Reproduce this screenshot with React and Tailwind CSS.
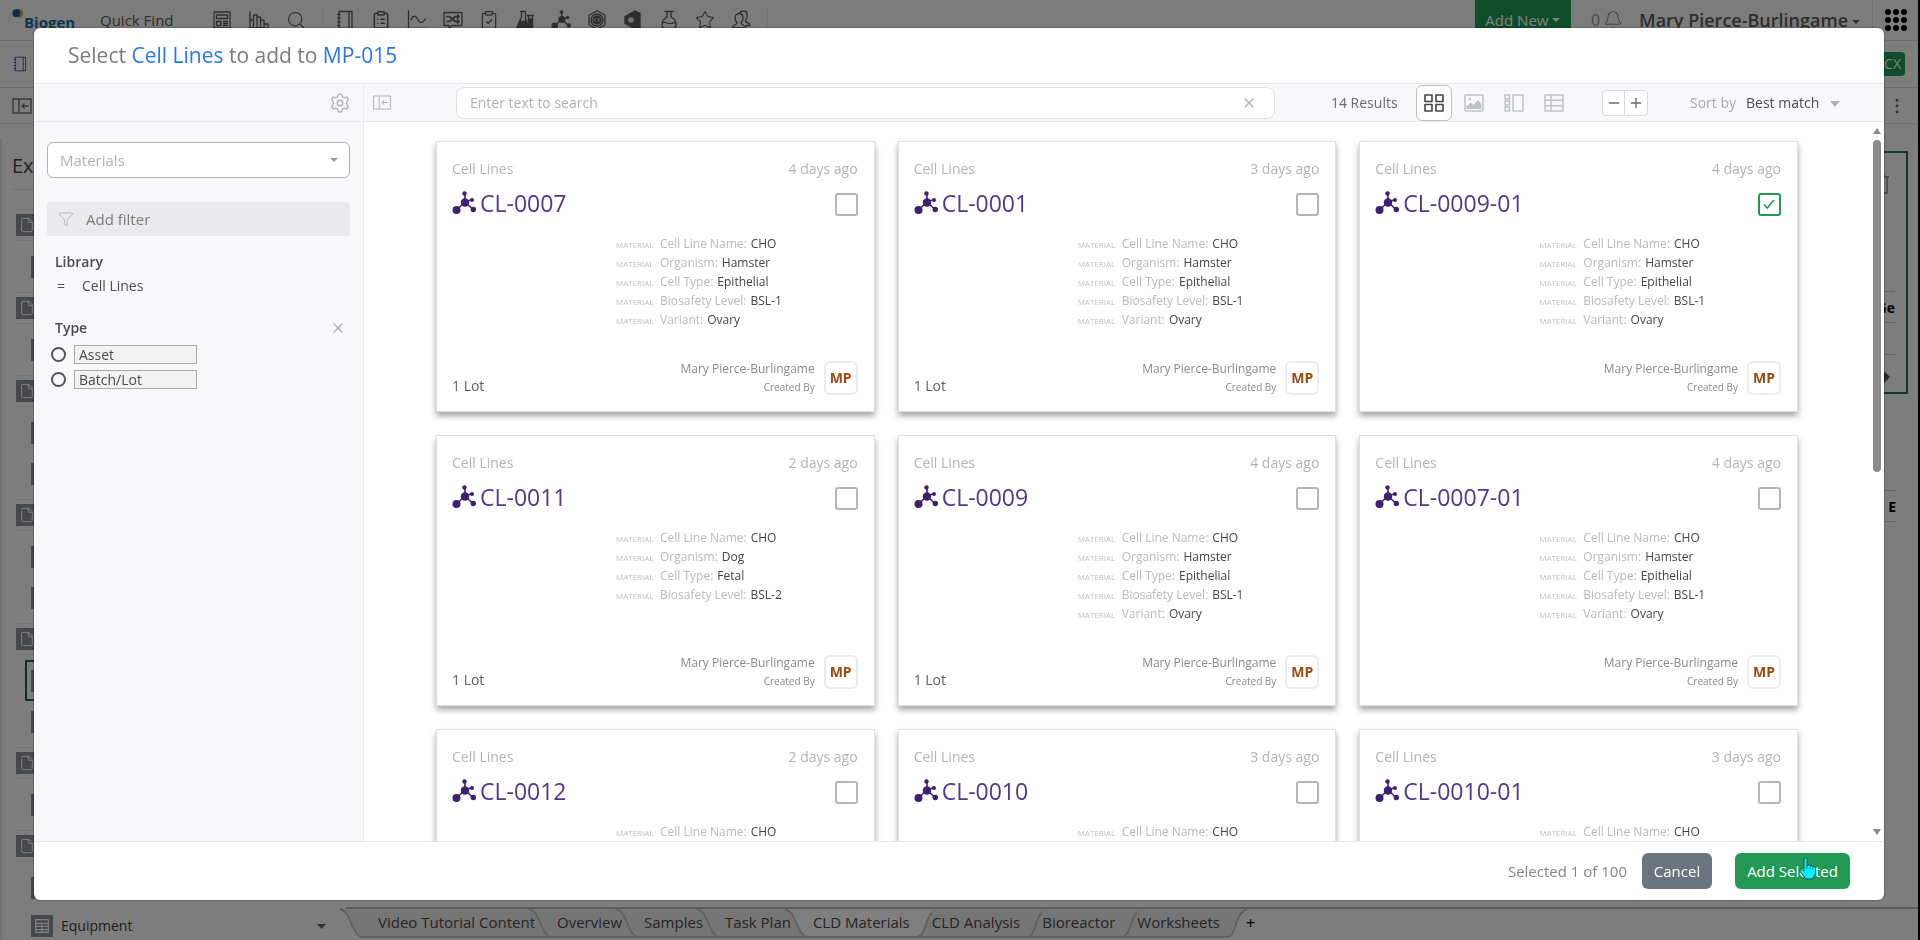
import { useState } from 'react';
import {
  Search,
  ClipboardList,
  ClipboardCheck,
  Star,
  Bell,
  Settings,
  X,
  Filter,
  File,
  Minus,
  Plus,
  MoreVertical,
} from 'lucide-react';

const hamster = [
  ['Cell Line Name', 'CHO'],
  ['Organism', 'Hamster'],
  ['Cell Type', 'Epithelial'],
  ['Biosafety Level', 'BSL-1'],
  ['Variant', 'Ovary'],
];

const dog = [
  ['Cell Line Name', 'CHO'],
  ['Organism', 'Dog'],
  ['Cell Type', 'Fetal'],
  ['Biosafety Level', 'BSL-2'],
];

const mary = { name: 'Mary Pierce-Burlingame', initials: 'MP' };

const items = [
  { id: 'CL-0007', age: '4 days ago', lots: '1 Lot', fields: hamster, by: mary },
  { id: 'CL-0001', age: '3 days ago', lots: '1 Lot', fields: hamster, by: mary },
  { id: 'CL-0009-01', age: '4 days ago', fields: hamster, by: mary },
  { id: 'CL-0011', age: '2 days ago', lots: '1 Lot', fields: dog, by: mary },
  { id: 'CL-0009', age: '4 days ago', lots: '1 Lot', fields: hamster, by: mary },
  { id: 'CL-0007-01', age: '4 days ago', fields: hamster, by: mary },
  { id: 'CL-0012', age: '2 days ago', fields: hamster.slice(0, 1) },
  { id: 'CL-0010', age: '3 days ago', fields: hamster.slice(0, 1) },
  { id: 'CL-0010-01', age: '3 days ago', fields: hamster.slice(0, 1) },
];

// f = folder row, s = child row, a = the child that is open
const tree = ['f', 's', 'f', 's', 'f', 's', 's', 'f', 's', 's', 'f', 'a', 's', 'f', 's', 'f', 's'];

const Svg = ({ children, className = 'w-5 h-5', box = '0 0 20 20' }) => (
  <svg
    viewBox={box}
    className={className}
    fill="none"
    stroke="currentColor"
    strokeWidth="1.3"
    strokeLinecap="round"
    strokeLinejoin="round"
    aria-hidden="true"
  >
    {children}
  </svg>
);

const Molecule = ({ className }) => (
  <svg viewBox="0 0 24 24" className={className} fill="currentColor" stroke="currentColor" aria-hidden="true">
    <path d="M4.5 19 13 11M13 11V3M13 11l6-2M13 11l8 7.500" strokeWidth="1.600" fill="none" />
    <circle cx="4.5" cy="19" r="4" stroke="none" />
    <circle cx="13" cy="11.500" r="4.200" stroke="none" />
    <circle cx="12.500" cy="2.500" r="2.200" stroke="none" />
    <circle cx="20" cy="9" r="2" stroke="none" />
    <circle cx="21.300" cy="18.500" r="2.700" stroke="none" />
  </svg>
);

const Caret = ({ className = 'w-2 h-1' }) => (
  <svg viewBox="0 0 10 6" className={className} preserveAspectRatio="none" fill="currentColor" aria-hidden="true">
    <path d="M0 0h10L5 6z" />
  </svg>
);

const FormIcon = () => (
  <Svg>
    <rect x="2" y="2" width="16" height="16" />
    <path d="M4.500 5h11v3.500h-11zM4.500 11.500h4.500v4H4.500zM11.500 11.500h4M11.500 13.500h4M11.500 15.500h4" />
  </Svg>
);

const BarsIcon = () => (
  <Svg>
    <path d="M1 2v16h18M1 10h3.500M4.500 18V5H8v13M8 18V7h3.500v11M11.500 18v-8H15v8M15 18v-4h4v4" />
  </Svg>
);

const NotebookIcon = ({ className }) => (
  <Svg className={className}>
    <path d="M4 1.500h13v17H4zM14 1.500v17M2.500 4.500H5M2.500 8H5M2.500 12H5M2.500 15.500H5" />
  </Svg>
);

const CurveIcon = () => (
  <Svg>
    <path d="M1.500 1v17.500H19M4 10c2-5 4.500-5 6.500-1s4.500 5 8 0" />
  </Svg>
);

const ShuffleIcon = () => (
  <Svg>
    <path d="M1 2.500h18v13H9l-3 3v-3H1z" />
    <path d="M4 6.500h2.500l6 5H16M4 11.500h2.500l6-5H16M14.500 5 16 6.500 14.500 8M14.500 10l1.500 1.500-1.500 1.500" strokeWidth="1.700" />
  </Svg>
);

const BenchIcon = () => (
  <Svg>
    <path d="M5.500 1.500h5M6.500 1.500V7L1.500 18.500h12" />
    <path d="M5 10.500 1.800 18.500h12.500L10.500 9.500V2" />
    <path d="M4.800 11.500h6.500l3 7H2z" fill="currentColor" />
    <path d="M12.500 5.500h6M13.500 5.500v11a2 2 0 0 0 4 0v-11" />
    <path d="M13.500 9h4v8h-4z" fill="currentColor" />
  </Svg>
);

const HexRingIcon = () => (
  <Svg>
    <path d="M10 .8l8 4.500v9.400l-8 4.500-8-4.500V5.300z" />
    <circle cx="10" cy="10" r="6" strokeWidth="1.500" />
    <circle cx="10" cy="10" r="4" fill="currentColor" />
    <path d="M9 8.800a1.400 1.400 0 1 0 0 2.400M11 8.800v2.400h1.200V8.800z" stroke="#ccc" strokeWidth=".8" />
  </Svg>
);

const SolidHexIcon = () => (
  <Svg>
    <path d="M2 6.500 12 1l5 2v14.500L12 19 2 13.500z" fill="currentColor" />
    <circle cx="8" cy="10" r="2.800" fill="#e8e8e8" stroke="none" />
  </Svg>
);

const FlaskIcon = () => (
  <Svg>
    <path d="M6 1.500h8M8 1.500V7c-3 1.500-5 4-5 7.500 0 2.500 1 4 2.500 4h9c1.500 0 2.500-1.500 2.500-4C17 11 15 8.500 12 7V1.500M3.500 13c3-2 5 1.500 8 .5 2-.7 3-1 5-.5" />
  </Svg>
);

const PeopleIcon = () => (
  <Svg>
    <path d="M8 3.500c-2.500 0-4 2-4 4.500 0 2 .8 3.300 1.800 4.300.3 1.700-.8 2.200-2.300 2.700-1.500.6-2 1.500-2 3h13c0-1.500-.5-2.400-2-3-1.500-.5-2.600-1-2.300-2.700 1-1 1.800-2.300 1.800-4.300 0-2.500-1.500-4.500-4-4.500z" />
    <path d="M9 2.500C10 1.500 11 1 12.300 1c2.500 0 4 2 4 4.500 0 2-.8 3.500-1.800 4.500-.2 1.500.5 2.200 2 2.700s2.500 1.300 2.500 2.800h-4" />
  </Svg>
);

const PanelIcon = ({ className }) => (
  <svg viewBox="0 0 20 16" className={className} fill="none" stroke="currentColor" strokeWidth="1.300" aria-hidden="true">
    <rect x="1" y="1" width="18" height="14" />
    <path d="M7 1v14M16.500 8H10M12.500 5.500 10 8l2.500 2.500" />
  </svg>
);

const topIcons = [
  ['Forms', <FormIcon />],
  ['Charts', <BarsIcon />],
  ['Search', <Search className="w-5 h-5" strokeWidth={1.3} />],
];

const appIcons = [
  ['Notebooks', <NotebookIcon />],
  ['Templates', <ClipboardList className="w-5 h-5" strokeWidth={1.8} />],
  ['Assays', <CurveIcon />],
  ['Workflows', <ShuffleIcon />],
  ['Tasks', <ClipboardCheck className="w-5 h-5" strokeWidth={1.5} />],
  ['Samples', <BenchIcon />],
  ['Materials', <Molecule className="w-5 h-5" />],
  ['Compounds', <HexRingIcon />],
  ['Structures', <SolidHexIcon />],
  ['Reactions', <FlaskIcon />],
  ['Favorites', <Star className="w-5 h-5" strokeWidth={1.3} />],
  ['Users', <PeopleIcon />],
];

const TopBar = () => (
  <header className="h-[41px] shrink-0 pt-2 flex items-start border-b border-[#dcdcdc] text-[#5c5c5c] bg-[#f7f9f7]">
    <div className="w-[88px] pl-3 flex">
      <svg viewBox="0 0 14 12" className="w-3 h-3" aria-hidden="true">
        <circle cx="8" cy="5" r="5" fill="#a9b845" />
        <circle cx="5" cy="5" r="4.500" fill="#25538f" />
      </svg>
      <span className="pt-1 text-[15px] leading-5 font-bold text-[#1d6f9f]">Biogen</span>
    </div>
    <span className="w-[112px] pl-3 text-[15px] leading-6">Quick Find</span>
    <nav className="flex h-8 pl-3 gap-[17px]">
      {topIcons.map(([name, icon]) => (
        <button key={name} aria-label={name} className="h-6 w-5 flex items-center">{icon}</button>
      ))}
    </nav>
    <nav className="flex h-8 ml-4 pl-3 pr-4 gap-4 border-x border-[#e6e6e6]">
      {appIcons.map(([name, icon]) => (
        <button key={name} aria-label={name} className="h-6 w-5 flex items-center">{icon}</button>
      ))}
    </nav>
    <div className="grow" />
    <button className="-mt-2 h-10 w-[96px] flex items-center justify-center gap-1 bg-[#1f9a55] text-white text-[15px]">
      Add New <Caret />
    </button>
    <span className="pl-5 text-base leading-6 text-[#999]">0</span>
    <Bell className="w-5 h-5 ml-[3px] mt-0.5 text-[#888]" strokeWidth={1.3} />
    <span className="pl-4 text-[18px] leading-6 font-semibold">Mary Pierce-Burlingame</span>
    <Caret className="w-2 h-1 mt-3 ml-1" />
    <div className="ml-3 mr-3 -mt-2 h-10 border-l border-[#dcdcdc]" />
    <svg viewBox="0 0 22 22" className="w-[22px] h-[22px] mr-[11px] mt-px text-black" fill="currentColor" aria-hidden="true">
      {[3, 11, 19].map((y) => [3, 11, 19].map((x) => <circle key={x + '-' + y} cx={x} cy={y} r="3" />))}
    </svg>
  </header>
);

const FileTree = () => (
  <aside className="w-[346px] shrink-0 mt-[15px] pl-[10px] border-l-2 border-[#e2e2e2] flex flex-col">
    <h2 className="h-[51px] leading-[54px] text-xl text-[#444] border-b border-[#e4e4e4]">Exp</h2>
    <div className="pt-[14px] pl-0.5">
      {tree.map((kind, i) =>
        kind === 'f' ? (
          <div key={i} className="h-[42px] flex items-center">
            <div className="w-full h-8 flex items-center border-y border-[#e8e8e8]">
              <span className="ml-0.5 w-[22px] h-[22px] flex items-center justify-center bg-[#8d9296] text-white">
                <File className="w-4 h-4" strokeWidth={1.5} />
              </span>
            </div>
          </div>
        ) : (
          <div key={i} className={'h-[41px] ml-[11px] flex items-center ' + (kind === 'a' ? 'pl-1 border-2 border-r-0 border-[#156b3c]' : 'pl-1.5')}>
            <span className="w-[22px] h-[22px] bg-[#8d9296]" />
          </div>
        )
      )}
    </div>
    <div className="h-9 mt-1 ml-[19px] pr-5 flex items-center text-[#3c3c3c]">
      <span className="w-[22px] h-[22px] flex items-center justify-center bg-[#8d9296] text-white">
        <Svg className="w-[18px] h-[18px]">
          <path d="M3 3h14v14H3zM3 7h14M3 10.500h14M3 14h14M10 7v10" />
        </Svg>
      </span>
      <span className="pl-2 text-sm grow">Equipment</span>
      <Caret className="w-[9px] h-[5px] text-[#666]" />
    </div>
  </aside>
);

const tabs = ['Video Tutorial Content', 'Overview', 'Samples', 'Task Plan', 'CLD Materials', 'CLD Analysis', 'Bioreactor', 'Worksheets'];
const activeTab = tabs.indexOf('CLD Materials');

// slanted divider; the half that belongs to the open tab is lighter
const Slant = ({ back, left, right, end }) => (
  <svg viewBox="0 0 22 30" className="w-[22px] h-[30px] shrink-0 overflow-visible" aria-hidden="true">
    <path d={back ? 'M0 0H-4C6 4 6 26 16 28H0z' : 'M0 0H26C14 4 17 26 7 28H0z'} fill={left} />
    <path d={back ? 'M-4 0H22V28H16C6 26 6 4-4 0z' : 'M26 0H22V28H7C17 26 14 4 26 0z'} fill={right} />
    <path
      d={(back ? 'M-6 0C6 3 5 26 16 28H22' : 'M28 0C14 3 18 26 7 28H0') + (end ? '' : 'M0 28H22')}
      fill="none"
      stroke="#c2c2c2"
      strokeWidth="2"
    />
  </svg>
);

const TabBar = () => (
  <div className="h-[33px] shrink-0 flex items-start border-t-2 border-[#b5b5b5] text-[#4a4a4a] text-[15px]" role="tablist">
    <Slant back end left="#fbfbfb" right="#ebebeb" />
    {tabs.map((tab, i) => (
      <div key={tab} className="flex shrink-0">
        <button
          role="tab"
          aria-selected={i === activeTab}
          className={'h-[29px] border-b-2 border-[#c2c2c2] whitespace-nowrap ' + (i === activeTab ? 'bg-white' : 'bg-[#ebebeb]') + (i === 0 ? ' pl-2.5' : '')}
        >
          {tab}
        </button>
        <Slant
          back={i < activeTab}
          end={i === tabs.length - 1}
          left={i === activeTab ? '#ffffff' : '#ebebeb'}
          right={i === activeTab - 1 ? '#ffffff' : i === tabs.length - 1 ? '#fbfbfb' : '#ebebeb'}
        />
      </div>
    ))}
    <button aria-label="Add tab" className="h-7 pl-1 text-base text-black">+</button>
  </div>
);

const Background = () => (
  <div className="h-screen overflow-hidden flex flex-col bg-[#fbfafb] border-r-2 border-black">
    <TopBar />
    <div className="h-[47px] shrink-0 flex items-center justify-between pl-3 pr-[13px] border-b border-[#dcdcdc]">
      <NotebookIcon className="w-4 h-5 text-[#6a55a8]" />
      <button className="h-6 w-20 pr-1 rounded bg-[#1f9a55] text-white text-sm text-right">CX</button>
    </div>
    <div className="h-9 shrink-0 flex items-center justify-between pl-3 pr-[11px] border-b border-[#e2e2e2] text-[#666]">
      <PanelIcon className="w-5 h-4" />
      <MoreVertical className="w-5 h-5" strokeWidth={1.5} />
    </div>
    <div className="grow min-h-0 flex">
      <FileTree />
      <section className="grow min-w-0 flex flex-col">
        <div className="grow min-h-0 pt-[27px] pr-[10px]">
          <div className="h-[243px] pt-[21px] border-2 border-[#1f7a48] flex flex-col items-end">
            <svg viewBox="0 0 18 20" className="w-[18px] h-5 mr-4 text-[#999]" fill="none" stroke="currentColor" strokeWidth="1.800" aria-hidden="true">
              <path d="M1 3h16M6 3V1h6v2M3 3v16h12V3M7 7v8M11 7v8" />
            </svg>
            <div className="w-20 mt-[97px] mr-[11px] h-8 border-y border-[#ccc] leading-8 text-right font-bold text-black text-sm">Ge</div>
            <div className="w-20 mr-[11px] h-8 border-b border-[#ccc]" />
            <svg viewBox="0 0 10 12" className="w-[10px] h-3 mt-4 mr-4 text-[#555]" fill="currentColor" aria-hidden="true">
              <path d="M4 0l6 6-6 6z" />
            </svg>
          </div>
          <div className="w-20 mt-[96px] ml-auto mr-3 h-8 border-y border-[#ccc] leading-8 text-right text-sm font-bold text-black">E</div>
        </div>
        <TabBar />
      </section>
    </div>
  </div>
);

const Card = ({ item, checked, onToggle }) => (
  <article className="h-[271px] pt-[17px] pl-[15px] pr-4 pb-4 flex flex-col bg-white border border-[#dfe0e6] shadow-[0_4px_6px_rgba(0,0,0,0.35)]">
    <div className="flex justify-between text-sm leading-5 text-[#b3b3b8]">
      <span>Cell Lines</span>
      <span>{item.age}</span>
    </div>
    <div className="h-8 mt-2 flex items-center">
      <Molecule className="w-6 h-6 text-[#3f1f70]" />
      <label htmlFor={item.id} className="pl-1 text-[23px] leading-8 text-[#52378a]">{item.id}</label>
      <span className="ml-auto mt-0.5 relative w-[23px] h-[23px]">
        <input
          id={item.id}
          type="checkbox"
          checked={checked}
          onChange={onToggle}
          className="block appearance-none w-[23px] h-[23px] rounded-[3px] border-2 border-[#b5b5b8] bg-white checked:border-[#229954]"
        />
        {checked && (
          <svg viewBox="0 0 12 12" className="absolute inset-0 m-auto w-3 h-3 pointer-events-none" fill="none" stroke="#229954" strokeWidth="1.600">
            <path d="M1 6.500 4.300 10 11 2" />
          </svg>
        )}
      </span>
    </div>
    <dl className="mt-[15px] pl-[164px] text-xs leading-[19px]">
      {item.fields.map(([label, value]) => (
        <div key={label} className="h-[19px] flex">
          <span className="w-11 pt-px text-[8px] text-[#c0c0c4]">MATERIAL</span>
          <dt className="text-[#b9b9be]">{label}:</dt>
          <dd className="pl-1 text-[#444]">{value}</dd>
        </div>
      ))}
    </dl>
    {item.by && (
      <div className="mt-auto h-[34px] flex items-center">
        <span className="pt-4 text-sm text-[#5f5f5f]">{item.lots}</span>
        <div className="ml-auto pr-[9px] text-right text-[#8a8a8a]">
          <p className="text-xs leading-[18px]">{item.by.name}</p>
          <p className="text-[10px] leading-[18px]">Created By</p>
        </div>
        <span className="w-[34px] h-[34px] rounded-md border-2 border-[#ececee] flex items-center justify-center text-sm font-bold text-[#9c4a12]">
          {item.by.initials}
        </span>
      </div>
    )}
  </article>
);

const SideFilters = () => (
  <aside className="w-[330px] shrink-0 flex flex-col bg-[#f8f8fb] border-r border-[#e9e9ef] text-[#4c4c4c]">
    <div className="h-[38px] shrink-0 pr-3 flex items-center justify-end border-b border-[#e6e7ee]">
      <button aria-label="Filter settings"><Settings className="w-[22px] h-[22px] text-[#b0b0b5]" strokeWidth={1.5} /></button>
    </div>
    <div className="pt-5 pl-[13px] pr-[13px]">
      <div className="relative">
        <select aria-label="Item type" className="w-full h-9 pl-3 appearance-none rounded-md border border-[#b3b3b6] bg-white text-[15px] text-[#b3b3b6]">
          <option>Materials</option>
        </select>
        <Caret className="absolute right-3 top-4 w-2 h-1 text-[#999] pointer-events-none" />
      </div>
      <button className="w-full h-[34px] mt-6 pl-2.5 flex items-center rounded-[3px] bg-[#eaeaec] text-[15px] text-[#7a7a7a]">
        <Filter className="w-[18px] h-4 mr-[11px] text-[#b5bcc0]" strokeWidth={1.5} />
        Add filter
      </button>
      <div className="pl-2 text-sm leading-5">
        <h3 className="mt-4 font-semibold">Library</h3>
        <p className="mt-1 flex"><span className="w-[27px] pl-0.5">=</span>Cell Lines</p>
        <div className="mt-[22px] flex items-center justify-between">
          <h3 className="font-semibold">Type</h3>
          <button aria-label="Remove type filter" className="pr-1"><X className="w-4 h-4 text-[#b0b0b3]" /></button>
        </div>
      </div>
      <div className="mt-1 pl-1 text-sm">
        {['Asset', 'Batch/Lot'].map((type) => (
          <label key={type} className="h-[25px] flex items-center gap-2">
            <input type="radio" name="type" value={type} className="appearance-none w-[15px] h-[15px] rounded-full border-2 border-[#555]" />
            <span className="w-[123px] h-[19px] pl-1 leading-[17px] border border-[#aaa] bg-[#f2f2f3]">{type}</span>
          </label>
        ))}
      </div>
    </div>
  </aside>
);

const Toolbar = () => {
  const [query, setQuery] = useState('');

  return (
    <div className="h-[38px] shrink-0 flex items-center bg-[#f8f8fb] border-b border-[#e6e7ee] text-sm text-[#6a6a6a]">
      <button aria-label="Collapse filters" className="ml-2 mr-16"><PanelIcon className="w-5 h-[15px] text-[#bdbdc2]" /></button>
      <div className="relative grow">
        <input
          type="text"
          aria-label="Search"
          value={query}
          onChange={(e) => setQuery(e.target.value)}
          placeholder="Enter text to search"
          className="block w-full h-8 px-[13px] rounded-lg border border-[#dfdfe6] bg-white placeholder:text-[#b0b0b3]"
        />
        <button aria-label="Clear search" onClick={() => setQuery('')} className="absolute right-[18px] top-2">
          <X className="w-4 h-4 text-[#aeb2b8]" />
        </button>
      </div>
      <span className="ml-14 w-[85px] whitespace-nowrap">14 Results</span>
      <div className="flex items-center gap-3 text-[#bfc3c9]">
        <button aria-label="Card view" className="w-9 h-9 flex items-center justify-center rounded-md border border-[#c0c0c4] bg-white text-[#444]">
          <Svg>
            <path d="M1 2h7v6.500H1zM12 2h7v6.500h-7zM1 11.500h7V18H1zM12 11.500h7V18h-7z" strokeWidth="1.600" />
          </Svg>
        </button>
        <button aria-label="Image view">
          <Svg>
            <rect x="1" y="2" width="18" height="16" rx="1" strokeWidth="1.600" />
            <path d="M2.500 16v-2.500l4-4 3 2.500 4.500-5 3.500 4.500V16z" fill="currentColor" stroke="none" />
            <circle cx="6" cy="6" r="1.300" fill="currentColor" stroke="none" />
          </Svg>
        </button>
        <button aria-label="List view" className="ml-2">
          <Svg>
            <path d="M1 2h4.500v4H1zM1 8h4.500v4H1zM1 14h4.500v4H1zM9 2h10v16H9z" strokeWidth="1.500" />
          </Svg>
        </button>
        <button aria-label="Table view" className="ml-2">
          <Svg>
            <path d="M1 2h18v16H1zM1 7.300h18M1 12.700h18M7 2v16" strokeWidth="1.500" />
          </Svg>
        </button>
      </div>
      <div className="ml-[38px] h-[26px] w-[46px] flex rounded border border-[#d8d8dc] bg-white">
        <button aria-label="Smaller cards" className="grow flex items-center justify-center border-r border-[#d8d8dc]"><Minus className="w-4 h-4" /></button>
        <button aria-label="Larger cards" className="grow flex items-center justify-center"><Plus className="w-4 h-4" /></button>
      </div>
      <label htmlFor="sort" className="ml-[42px] text-[#a9a9ad]">Sort by</label>
      <div className="relative ml-2.5 mr-11">
        <select id="sort" className="appearance-none w-[94px] text-[#4c4c4c]">
          <option>Best match</option>
        </select>
        <Caret className="absolute right-0 top-2 w-[10px] h-1.5 text-[#b0b0b3] pointer-events-none" />
      </div>
    </div>
  );
};

const HandCursor = () => (
  <svg viewBox="0 0 18 24" className="absolute right-[33px] top-1 w-[18px] h-6 pointer-events-none" aria-hidden="true">
    <path
      d="M5 2.500c0-2 3-2 3 0V9l1-.8c1-.6 2 0 2.200.8 1-.8 2.300-.2 2.500.8 1.300-.6 2.800 0 2.800 1.500V15c0 2-1 3.500-2 5l-1 2H6.500L5.500 20 1.500 15c-1.500-2 .5-3.500 2-2.200L5 14z"
      fill="#00f2ff"
      stroke="#12544f"
    />
    <path d="M8 9v3M11.200 9.500V12M13.700 10.500V12.500" stroke="#12808a" fill="none" />
  </svg>
);

const App = () => {
  const [selected, setSelected] = useState(['CL-0009-01']);

  const toggle = (id) => {
    setSelected(selected.includes(id) ? selected.filter((s) => s !== id) : [...selected, id]);
  };

  return (
    <div className="font-['Open_Sans','Noto_Sans',sans-serif]">
      <Background />
      <div className="fixed inset-0 pt-7 pb-10 pl-[34px] pr-9 bg-black/50">
        <div role="dialog" aria-label="Select Cell Lines" className="h-full flex flex-col rounded-md overflow-hidden bg-white shadow-[0_0_2px_rgba(0,0,0,0.6)]">
          <h1 className="h-14 shrink-0 pl-[34px] leading-[54px] text-[21px] text-[#7c7c7c] border-b border-[#e6e7ee]">
            Select <span className="text-[#2878e8]">Cell Lines</span> to add to <span className="text-[#2878e8]">MP-015</span>
          </h1>

          <div className="grow min-h-0 flex">
            <SideFilters />
            <div className="grow min-w-0 flex flex-col">
              <Toolbar />
              <div className="grow min-h-0 flex">
                <div className="grow overflow-hidden px-[72px] pt-[19px]">
                  <div className="grid grid-cols-3 gap-[23px]">
                    {items.map((item) => (
                      <Card
                        key={item.id}
                        item={item}
                        checked={selected.includes(item.id)}
                        onToggle={() => toggle(item.id)}
                      />
                    ))}
                  </div>
                </div>
                <div className="w-[14px] shrink-0 flex flex-col items-center py-1.5 text-[#8a8a8a]">
                  <Caret className="w-2 h-1.5 rotate-180" />
                  <div className="mt-1.5 w-2 h-[47%] rounded-full bg-[#8c8c8c]" />
                  <Caret className="w-2 h-1.5 mt-auto" />
                </div>
              </div>
            </div>
          </div>

          <div className="h-[59px] shrink-0 pr-[34px] flex items-center justify-end border-t border-[#e6e7ee] text-[15px] text-[#858585]">
            <span>Selected {selected.length} of 100</span>
            <button className="ml-[15px] w-[70px] h-9 rounded-md bg-[#6c757d] text-white">Cancel</button>
            <div className="relative ml-[23px]">
              <button className="w-[115px] h-9 rounded-md bg-[#229954] text-white">Add Selected</button>
              <HandCursor />
            </div>
          </div>
        </div>
      </div>
    </div>
  );
};

export default App;
